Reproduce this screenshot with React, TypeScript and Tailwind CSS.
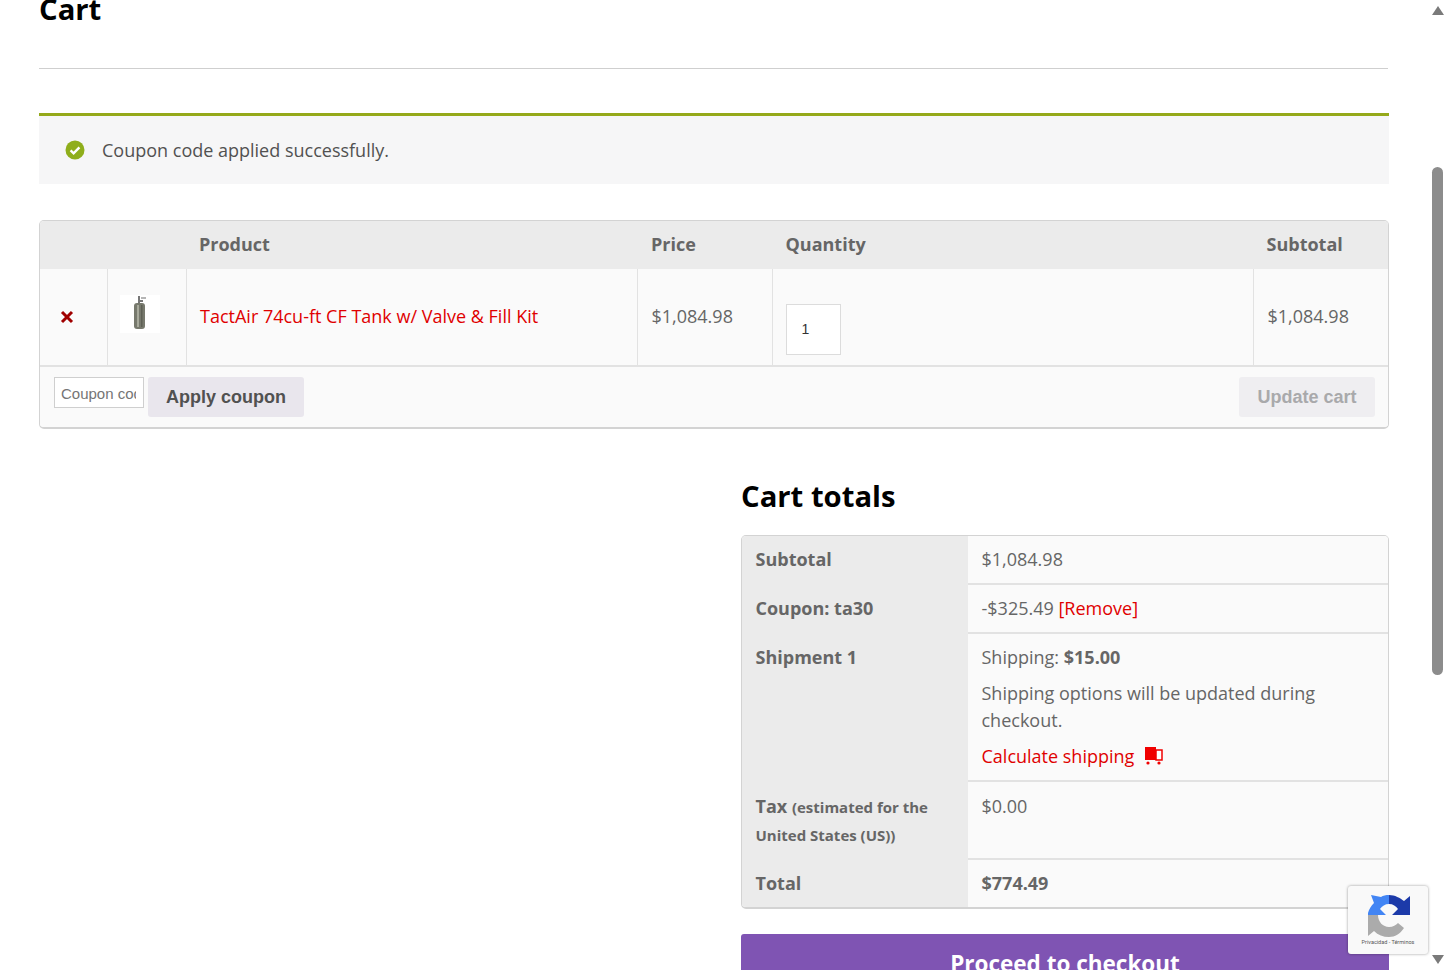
import type { ReactNode } from "react"

function TotalsRow({ label, children, last }: { label: ReactNode; children: ReactNode; last?: boolean }) {
  return (
    <tr>
      <th className={"w-[226px] bg-[#ebebeb] pt-[10px] pr-[14px] pb-[10px] pl-[13.5px] text-left align-top font-bold text-[#666] " + (last ? "" : "border-b-2 border-[#ebebeb]")}>{label}</th>
      <td className={"bg-[#fafafa] pt-[10px] pr-[14px] pb-[10px] pl-[13.5px] align-top " + (last ? "" : "border-b-2 border-[#e2e2e2]")}>{children}</td>
    </tr>
  )
}

function Recaptcha() {
  return (
    <div className="absolute left-[1348px] top-[886px] flex h-[68px] w-[80px] flex-col items-center rounded-[3px] bg-[#f9f9f9] pt-[9px] shadow-[0_0_3px_rgba(0,0,0,0.4)]">
      <svg width="42" height="42" viewBox="0 0 42 42" className="ml-[2px]">
        <path d="M21 0C27 0 32 3 36 6L42 1V20H24L30 14C28 11 25 9 21 9Z" fill="#1c3aa9" />
        <path d="M21 0V9C17 9 14 11 12 14L18 20H0V18C1 14 3 11 6 8L3 0L13 2C15 .5 18 0 21 0Z" fill="#4285f4" />
        <path d="M0 20H10C10 27 15 32 21 32C25 32 28 30 30 28L36 33C32 39 27 42 21 42C15 42 10 40 6 36L0 41Z" fill="#ababab" />
      </svg>
      <div className="mt-px font-['Roboto',sans-serif] text-[5.5px] leading-[8px] text-[#555]">Privacidad - Términos</div>
    </div>
  )
}

function Scrollbar() {
  return (
    <div className="absolute left-[1428px] top-0 flex h-[970px] w-[19px] flex-col items-center">
      <div className="mt-[6px] h-0 w-0 border-x-[6px] border-b-[9px] border-x-transparent border-b-[#7a7a7a]" />
      <div className="mt-[152px] h-[508px] w-[11px] rounded-[6px] bg-[#8c8c8c]" />
      <div className="mt-[280px] h-0 w-0 border-x-[6px] border-t-[9px] border-x-transparent border-t-[#7a7a7a]" />
    </div>
  )
}

export default function App() {
  return (
    <div className="relative h-[970px] overflow-hidden bg-white font-['Open_Sans',sans-serif] text-[18px] leading-[27px] text-[#666]">
      <div className="ml-[39px] w-[1350px]">
        <h1 className="mt-[-10px] h-[79px] w-[1349px] border-b border-[#cfcfcf] text-[29.25px] leading-[38px] font-bold text-black">Cart</h1>

        <div className="mt-[44px] flex h-[71px] items-center border-t-[3px] border-[#95a91a] bg-[#f6f6f7] pl-[26px] text-[#515151]">
          <svg width="20" height="20" viewBox="0 0 20 20">
            <circle cx="10" cy="10" r="9.5" fill="#8fae1b" />
            <path d="M5.6 10.4l3 3 5.8-6" fill="none" stroke="#fff" strokeWidth="2.4" />
          </svg>
          <span className="ml-[17px]">Coupon code applied successfully.</span>
        </div>

        <div className="mt-[36px] h-[209px] overflow-hidden rounded-[5px] border border-b-2 border-[#d3d3d3]">
          <table className="w-full table-fixed border-collapse">
            <thead>
              <tr className="h-[48px] bg-[#ebebeb] text-left font-bold">
                <th className="w-[67px]" />
                <th className="w-[79px]" />
                <th className="w-[451px] pb-[2px] pl-[13px]">Product</th>
                <th className="w-[135px] pb-[2px] pl-[14px]">Price</th>
                <th className="w-[481px] pb-[2px] pl-[13.5px]">Quantity</th>
                <th className="pb-[2px] pl-[13.5px]">Subtotal</th>
              </tr>
            </thead>
            <tbody>
              <tr className="h-[97px] border-b-2 border-[#e2e2e2] bg-[#fafafa]">
                <td className="border-r border-[#e2e2e2] pb-[2px] pl-[20px]">
                  <svg width="14" height="14" viewBox="0 0 14 14" className="mt-[1px]">
                    <path d="M2 2l10 10M12 2L2 12" stroke="#a00000" strokeWidth="3" />
                  </svg>
                </td>
                <td className="border-r border-[#e2e2e2] pb-[7px] pl-[12px]">
                  <div className="flex h-[38px] w-[40px] items-center justify-center bg-white">
                    <svg width="16" height="36" viewBox="0 0 16 36">
                      <path d="M6 0h2v4h3v2H8v2H6z" fill="#777" />
                      <path d="M9 1h5v2H9z" fill="#b5b5b5" />
                      <rect x="2" y="7" width="11" height="26" rx="3" fill="#77796d" />
                      <rect x="5" y="9" width="2" height="22" fill="#a8aa9c" />
                      <rect x="9" y="9" width="1.5" height="22" fill="#5e6055" />
                    </svg>
                  </div>
                </td>
                <td className="border-r border-[#e2e2e2] pb-px pl-[13.5px] text-[#e00000]">TactAir 74cu-ft CF Tank w/ Valve &amp; Fill Kit</td>
                <td className="border-r border-[#e2e2e2] pb-px pl-[14px]">$1,084.98</td>
                <td className="border-r border-[#e2e2e2] pl-[13px]">
                  <input readOnly value="1" className="mt-[24px] h-[51px] w-[55px] border border-[#dcdcdc] bg-white pl-[15px] font-['Liberation_Sans',sans-serif] text-[14px] text-[#333] outline-none" />
                </td>
                <td className="pb-px pl-[14px]">$1,084.98</td>
              </tr>
              <tr className="bg-[#fafafa]">
                <td colSpan={6} className="h-[61px] px-[14px] align-top">
                  <div className="flex items-start justify-between pt-[10px]">
                    <div className="flex items-start gap-[4px]">
                      <input readOnly placeholder="Coupon code" className="h-[31px] w-[90px] border border-[#cfcfcf] bg-white pt-px pr-[7px] pl-[6px] font-['Liberation_Sans',sans-serif] text-[15px] outline-none placeholder:text-[#757575]" />
                      <button className="h-[40px] w-[156px] rounded-[3px] bg-[#e9e6ed] font-['Liberation_Sans',sans-serif] text-[18px] font-bold text-[#515151]">Apply coupon</button>
                    </div>
                    <button className="mr-[-1px] h-[40px] w-[136px] rounded-[3px] bg-[#efeef1] font-['Liberation_Sans',sans-serif] text-[18px] font-bold text-[#a9a9ab]">Update cart</button>
                  </div>
                </td>
              </tr>
            </tbody>
          </table>
        </div>

        <div className="mt-[45px] ml-[702px] w-[648px]">
          <h2 className="text-[29.25px] leading-[44px] font-bold text-black">Cart totals</h2>
          <div className="mt-[17px] overflow-hidden rounded-[5px] border border-b-2 border-[#d3d3d3]">
            <table className="w-full border-collapse">
              <tbody>
                <TotalsRow label="Subtotal">$1,084.98</TotalsRow>
                <TotalsRow label="Coupon: ta30">
                  -$325.49 <span className="text-[#e00000]">[Remove]</span>
                </TotalsRow>
                <TotalsRow label="Shipment 1">
                  <div>Shipping: <strong>$15.00</strong></div>
                  <div className="mt-[9px]">Shipping options will be updated during checkout.</div>
                  <div className="mt-[9px] flex items-center text-[#e00000]">
                    Calculate shipping
                    <svg width="19" height="19" viewBox="0 0 19 19" className="mt-[-3px] ml-[10px]">
                      <path d="M1 1h11v13H1z" fill="#f00000" />
                      <path d="M12 4h6v10h-6z" fill="#fff" stroke="#f00000" strokeWidth="1.5" />
                      <circle cx="4" cy="17" r="1.6" fill="#f00000" />
                      <circle cx="15" cy="17" r="1.6" fill="#f00000" />
                    </svg>
                  </div>
                </TotalsRow>
                <TotalsRow label={<div className="mt-px mb-[-1px]">Tax <small className="text-[15px]">(estimated for the United States (US))</small></div>}>
                  <div className="pt-[1px]">$0.00</div>
                </TotalsRow>
                <TotalsRow label="Total" last>
                  <strong>$774.49</strong>
                </TotalsRow>
              </tbody>
            </table>
          </div>
          <div className="mt-[25px] h-[60px] rounded-[3px] bg-[#7f54b3] pt-[16px] text-center text-[22.5px] font-bold text-white">Proceed to checkout</div>
        </div>
      </div>
      <Scrollbar />
      <Recaptcha />
    </div>
  )
}
